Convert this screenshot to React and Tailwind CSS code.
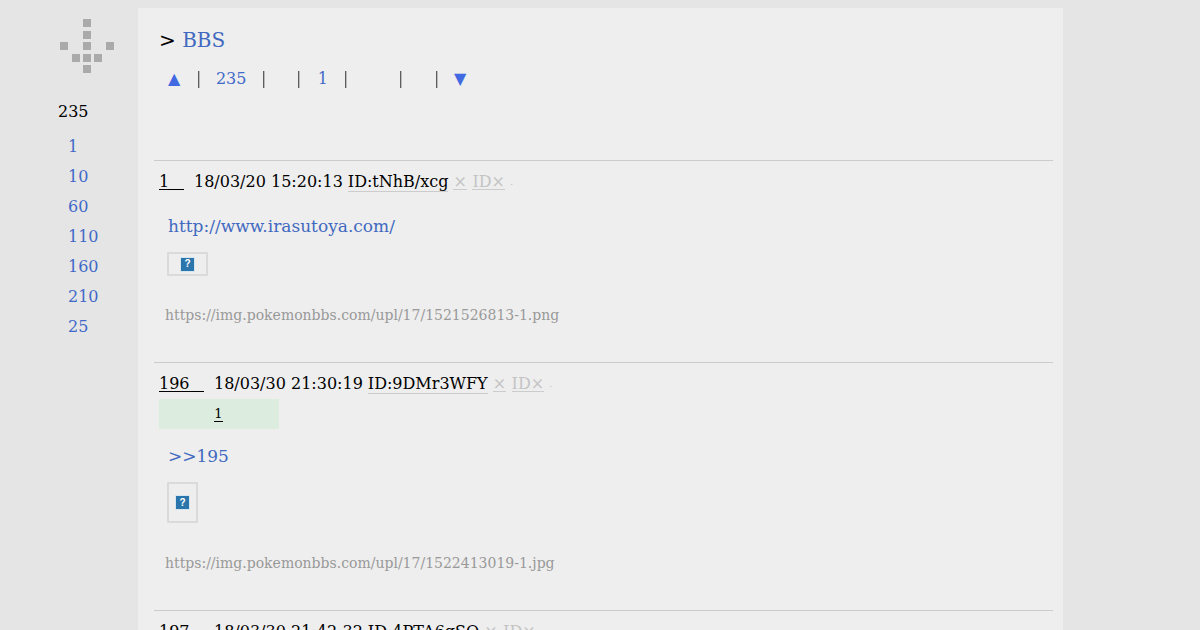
const blocks = [
  [23, 19], [23, 31], [23, 42], [0, 42], [46, 42], [12, 54], [23, 54], [34, 54], [23, 65],
];

const sideLinks = ['1', '10', '60', '110', '160', '210', '25'];

const Logo = () => (
  <svg width="54" height="54" viewBox="0 19 54 54" className="ml-[60px]" fill="#aaaaaa">
    {blocks.map(([x, y]) => (
      <rect key={`${x}-${y}`} x={x} y={y} width="8" height="8" />
    ))}
  </svg>
);

const Sep = ({ className = '' }) => <span className={`text-[#555] will-change-transform ${className}`}>|</span>;

const Broken = () => (
  <span className="flex h-[15px] w-[15px] items-center justify-center border border-[#d5e6f0] bg-[#2a75ab] font-['Liberation_Sans',sans-serif] text-[10px] font-bold leading-none text-white">
    ?
  </span>
);

const PostHead = ({ no, noWidth, date, id }) => (
  <div className="flex h-[20px] items-center whitespace-nowrap pl-[5px] text-[16px] leading-[20px]">
    <span className={`${noWidth} border-b border-black leading-[15px] text-black`}>{no}</span>
    <span className="ml-[10px] text-black">{date}</span>
    <span className="ml-[5px] border-b border-[#ccc] leading-[19px] text-black">{id}</span>
    <span className="ml-[5px] border-b border-[#ccc] leading-[15px] text-[#c4c4c4]">×</span>
    <span className="ml-[5.5px] border-b border-[#ccc] leading-[15px] text-[#c4c4c4]">ID×</span>
    <span className="ml-[5px] text-[10px] text-[#c4c4c4]">.</span>
  </div>
);

const Post = ({ children }) => <div className="border-t border-[#cccccc] pt-[11px]">{children}</div>;

export default function App() {
  return (
    <div className="flex h-[630px] overflow-hidden bg-[#e5e5e5] font-['DejaVu_Serif',serif]">
      <aside className="w-[138px] shrink-0">
        <div className="pt-[19px]">
          <Logo />
        </div>
        <div className="ml-[58px] mt-[27px] text-[16px] leading-[24px] text-black">235</div>
        <ul className="ml-[68px] mt-[8px] text-[16px] leading-[30px] text-[#4169c8]">
          {sideLinks.map((l, i) => (
            <li key={i}>{l}</li>
          ))}
        </ul>
      </aside>

      <main className="mt-2 w-[925px] shrink-0 bg-[#eeeeee] pl-4 pr-[10px]">
        <div className="flex h-[152px] flex-col pl-[5px]">
          <h1 className="mt-[19px] text-[20px] font-normal leading-[26px] text-black">
            <span className="font-['DejaVu_Sans',sans-serif]">&gt;</span>{' '}
            <span className="text-[#4169c0]">BBS</span>
          </h1>
          <nav className="mt-[14px] flex h-[24px] items-center pl-[9px] text-[16px] text-[#4169c8]">
            <span className="w-[28px] font-['DejaVu_Sans',sans-serif] text-[#4169e1]">▲</span>
            <Sep />
            <span className="ml-[14.5px]">235</span>
            <Sep className="ml-[15px]" />
            <Sep className="ml-[29.5px]" />
            <span className="ml-[16px]">1</span>
            <Sep className="ml-[15px]" />
            <Sep className="ml-[50px]" />
            <Sep className="ml-[30px]" />
            <span className="ml-[15px] font-['DejaVu_Sans',sans-serif] text-[#4169e1]">▼</span>
          </nav>
        </div>

        <Post>
          <PostHead no="1" noWidth="w-[25px]" date="18/03/20 15:20:13" id="ID:tNhB/xcg" />
          <div className="ml-[14px] mt-[23px] text-[17px] leading-[22px] text-[#4169c0]">http://www.irasutoya.com/</div>
          <div className="ml-[13px] mt-[15px] flex h-[24px] w-[41px] items-center justify-center rounded-[1px] border-2 border-[#dadada]">
            <Broken />
          </div>
          <div className="ml-[11px] mt-[29px] h-[57px] text-[14px] leading-[20px] text-[#999999]">
            https://img.pokemonbbs.com/upl/17/1521526813-1.png
          </div>
        </Post>

        <Post>
          <PostHead no="196" noWidth="w-[45px]" date="18/03/30 21:30:19" id="ID:9DMr3WFY" />
          <div className="ml-[5px] mt-[5px] flex h-[30px] w-[120px] items-center justify-center bg-[#dcecdf] pr-[1px] text-[13px] text-black">
            <span className="border-b border-black leading-[15px]">1</span>
          </div>
          <div className="ml-[14px] mt-[16px] text-[17px] leading-[22px] text-[#4169c0]">&gt;&gt;195</div>
          <div className="ml-[13px] mt-[15px] flex h-[41px] w-[31px] items-center justify-center rounded-[1px] border-2 border-[#dadada]">
            <Broken />
          </div>
          <div className="ml-[11px] mt-[30px] h-[57px] text-[14px] leading-[20px] text-[#999999]">
            https://img.pokemonbbs.com/upl/17/1522413019-1.jpg
          </div>
        </Post>

        <Post>
          <PostHead no="197" noWidth="w-[45px]" date="18/03/30 21:42:32" id="ID:4PTA6gSQ" />
        </Post>
      </main>
    </div>
  );
}
